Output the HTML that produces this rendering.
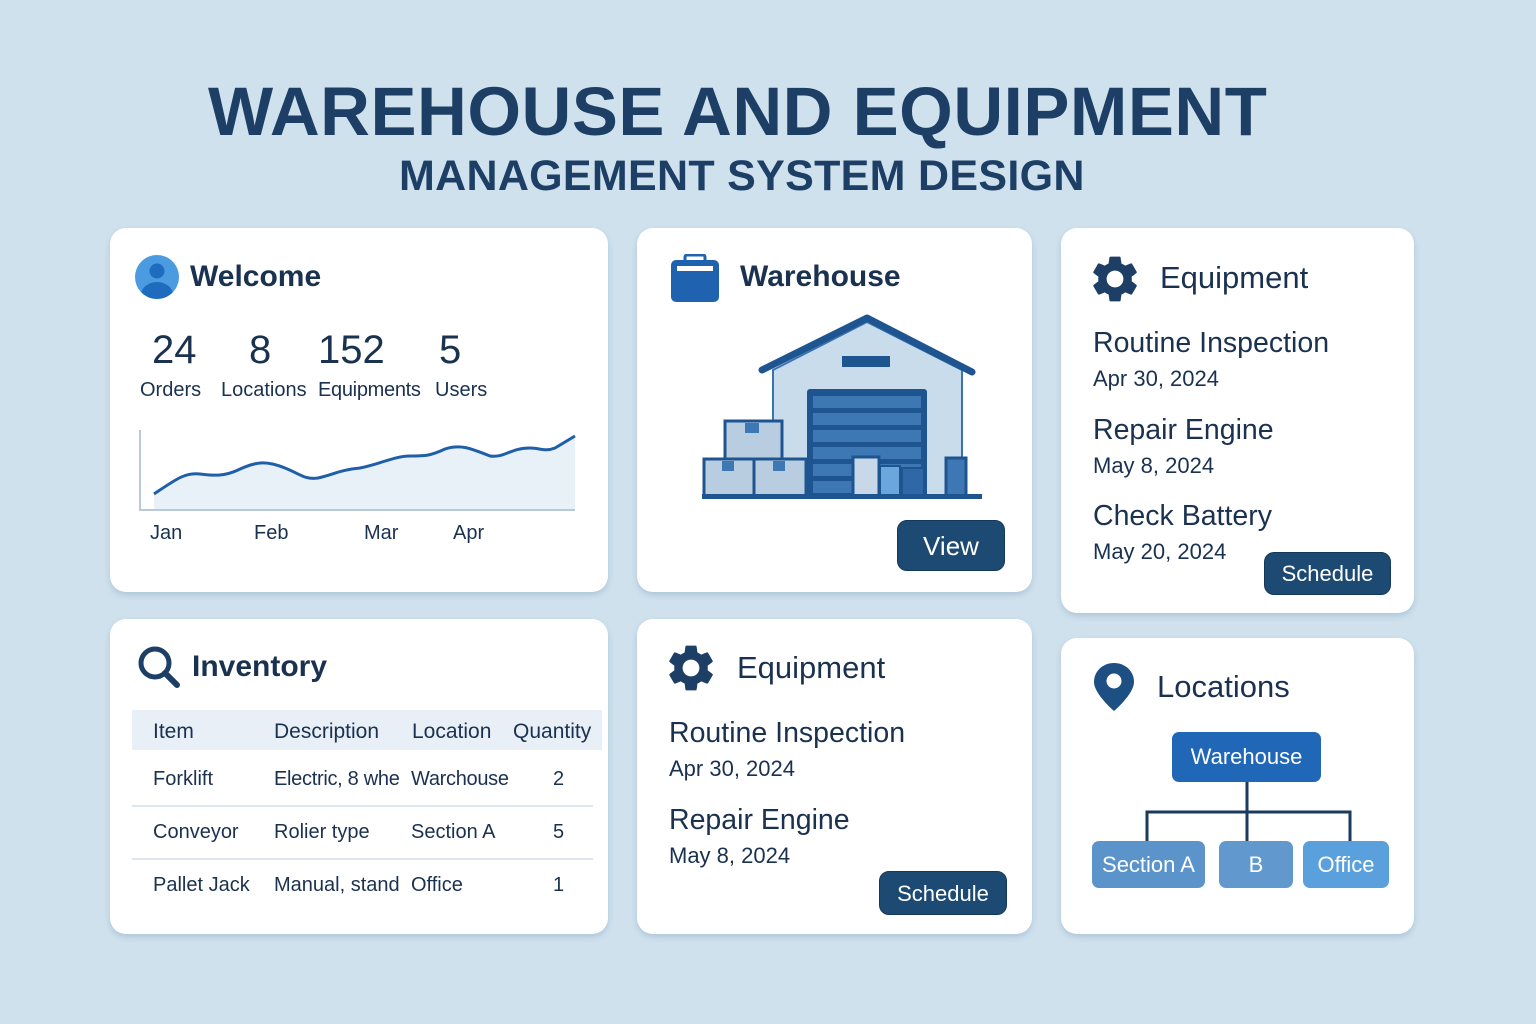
<!DOCTYPE html>
<html><head><meta charset="utf-8"><style>
*{margin:0;padding:0;box-sizing:border-box}
body{width:1536px;height:1024px;background:#cfe1ed;font-family:"Liberation Sans","DejaVu Sans",sans-serif;color:#1a3150;position:relative;overflow:hidden}
.a{position:absolute;white-space:nowrap}
.card{position:absolute;background:#fff;border-radius:16px;box-shadow:0 3px 6px rgba(80,120,160,.25)}
.h{font-size:30px;font-weight:bold;color:#1a3150}
.btn{position:absolute;background:#1d4a72;color:#fff;border-radius:10px;text-align:center;border:1px solid #15385a}
.t{font-size:20px;color:#1a3150}
.th{font-size:21px;color:#1a3150}
</style></head><body>
<div class="a" style="left:208px;top:72px;font-size:69px;font-weight:bold;color:#1d3f66;letter-spacing:0.5px">WAREHOUSE AND EQUIPMENT</div>
<div class="a" style="left:399px;top:152px;font-size:43px;font-weight:bold;color:#1d3f66;letter-spacing:0.3px">MANAGEMENT SYSTEM DESIGN</div>

<!-- Welcome -->
<div class="card" style="left:110px;top:228px;width:498px;height:364px"></div>
<svg class="a" style="left:135px;top:255px" width="44" height="44" viewBox="0 0 44 44"><defs><clipPath id="c"><circle cx="22" cy="22" r="22"/></clipPath></defs><circle cx="22" cy="22" r="22" fill="#4a9be0"/><g clip-path="url(#c)" fill="#1f6bbd"><circle cx="22" cy="16" r="7.5"/><ellipse cx="22" cy="40" rx="16" ry="13"/></g></svg>
<div class="a h" style="left:190px;top:260px">Welcome</div>
<div class="a" style="left:152px;top:328px;font-size:40px;color:#1a3150">24</div>
<div class="a" style="left:249px;top:328px;font-size:40px;color:#1a3150">8</div>
<div class="a" style="left:318px;top:328px;font-size:40px;color:#1a3150">152</div>
<div class="a" style="left:439px;top:328px;font-size:40px;color:#1a3150">5</div>
<div class="a t" style="left:140px;top:379px">Orders</div>
<div class="a t" style="left:221px;top:379px">Locations</div>
<div class="a t" style="left:318px;top:379px;letter-spacing:-0.3px">Equipments</div>
<div class="a t" style="left:435px;top:379px">Users</div>
<svg class="a" style="left:130px;top:420px" width="460" height="100" viewBox="130 420 460 100">
<path d="M154 494 C175 480 185 472 200 474 C215 476 225 476 238 470 C255 462 265 460 285 468 C300 474 305 480 318 478 C335 474 340 470 360 468 C380 464 395 456 410 456 C425 456 430 456 445 449 C460 444 470 448 490 456 C505 458 510 448 530 448 C540 448 545 452 555 448 L575 436 L575 510 L154 510Z" fill="#e9f1f8"/>
<path d="M154 494 C175 480 185 472 200 474 C215 476 225 476 238 470 C255 462 265 460 285 468 C300 474 305 480 318 478 C335 474 340 470 360 468 C380 464 395 456 410 456 C425 456 430 456 445 449 C460 444 470 448 490 456 C505 458 510 448 530 448 C540 448 545 452 555 448 L575 436" fill="none" stroke="#1f5faa" stroke-width="3"/>
<path d="M140 430 V510 H575" fill="none" stroke="#b9c9d8" stroke-width="2"/>
</svg>
<div class="a t" style="left:150px;top:522px">Jan</div>
<div class="a t" style="left:254px;top:522px">Feb</div>
<div class="a t" style="left:364px;top:522px">Mar</div>
<div class="a t" style="left:453px;top:522px">Apr</div>

<!-- Warehouse -->
<div class="card" style="left:637px;top:228px;width:395px;height:364px"></div>
<svg class="a" style="left:671px;top:254px" width="48" height="48" viewBox="0 0 48 48"><rect x="0" y="6" width="48" height="42" rx="5" fill="#1f63b0"/><rect x="14" y="1" width="20" height="10" rx="2" fill="none" stroke="#1f63b0" stroke-width="3"/><rect x="6" y="12" width="36" height="5" fill="#fff"/></svg>
<div class="a h" style="left:740px;top:260px">Warehouse</div>
<svg class="a" style="left:700px;top:314px" width="285" height="186" viewBox="700 314 285 186">
<path d="M773 370 L867 322 L962 370 V497 H773Z" fill="#c9dcec" stroke="#3a74b0" stroke-width="2"/>
<path d="M762 370 L867 318 L972 372" fill="none" stroke="#1e5591" stroke-width="7" stroke-linecap="round" stroke-linejoin="round"/>
<rect x="842" y="356" width="48" height="11" fill="#1e5591"/>
<rect x="807" y="389" width="120" height="108" rx="3" fill="#1e5591"/>
<g fill="#3d78b4"><rect x="813" y="396" width="108" height="12"/><rect x="813" y="413" width="108" height="12"/><rect x="813" y="430" width="108" height="12"/><rect x="813" y="447" width="108" height="12"/><rect x="813" y="464" width="108" height="12"/><rect x="813" y="481" width="108" height="12"/></g>
<rect x="853" y="457" width="26" height="40" fill="#c8d8e8" stroke="#1e5591" stroke-width="3"/>
<rect x="880" y="466" width="20" height="31" fill="#6ba6dc" stroke="#1e5591" stroke-width="2"/>
<rect x="902" y="468" width="22" height="29" fill="#2e68a6" stroke="#1e5591" stroke-width="2"/>
<rect x="946" y="458" width="20" height="39" fill="#3d78b4" stroke="#1e5591" stroke-width="3"/>
<rect x="725" y="421" width="57" height="38" fill="#b9cde0" stroke="#1e5591" stroke-width="3"/>
<rect x="745" y="423" width="14" height="10" fill="#3d78b4"/>
<rect x="704" y="459" width="50" height="38" fill="#b9cde0" stroke="#1e5591" stroke-width="3"/>
<rect x="754" y="459" width="52" height="38" fill="#b9cde0" stroke="#1e5591" stroke-width="3"/>
<rect x="722" y="461" width="12" height="10" fill="#3d78b4"/><rect x="773" y="461" width="12" height="10" fill="#3d78b4"/>
<rect x="702" y="494" width="280" height="5" fill="#1e5591"/>
</svg>
<div class="btn" style="left:897px;top:520px;width:108px;height:51px;font-size:26px;line-height:50px">View</div>

<!-- Equipment right -->
<div class="card" style="left:1061px;top:228px;width:353px;height:385px"></div>
<svg class="a" style="left:1087px;top:251px" width="56" height="56" viewBox="0 0 24 24"><path fill="#1d3f66" d="M19.14 12.94c.04-.3.06-.61.06-.94 0-.32-.02-.64-.07-.94l2.030-1.58a.49.49 0 0 0 .12-.61l-1.92-3.32a.49.49 0 0 0-.59-.22l-2.39.96c-.5-.38-1.03-.7-1.62-.94l-.36-2.54a.48.48 0 0 0-.48-.41h-3.84c-.24 0-.43.17-.47.41l-.36 2.54c-.59.24-1.13.57-1.62.94l-2.39-.96c-.22-.08-.47 0-.59.22L2.74 8.87c-.12.21-.08.47.12.61l2.03 1.58c-.05.3-.07.62-.07.94s.02.64.07.94l-2.03 1.58a.49.49 0 0 0-.12.61l1.92 3.32c.12.22.37.29.59.22l2.39-.96c.5.38 1.03.7 1.62.94l.36 2.54c.05.24.24.41.48.41h3.84c.24 0 .44-.17.47-.41l.36-2.54c.59-.24 1.13-.56 1.62-.94l2.39.96c.22.08.47 0 .59-.22l1.92-3.32c.12-.22.07-.47-.12-.61l-2.01-1.58zM12 15.6A3.6 3.6 0 1 1 12 8.4a3.6 3.6 0 0 1 0 7.2z"/></svg>
<div class="a h" style="left:1160px;top:260px;font-weight:normal;font-size:31px">Equipment</div>
<div class="a" style="left:1093px;top:327px;font-size:28.5px">Routine Inspection</div>
<div class="a" style="left:1093px;top:366px;font-size:22px">Apr 30, 2024</div>
<div class="a" style="left:1093px;top:414px;font-size:28.5px">Repair Engine</div>
<div class="a" style="left:1093px;top:453px;font-size:22px">May 8, 2024</div>
<div class="a" style="left:1093px;top:500px;font-size:28.5px">Check Battery</div>
<div class="a" style="left:1093px;top:539px;font-size:22px">May 20, 2024</div>
<div class="btn" style="left:1264px;top:552px;width:127px;height:43px;font-size:22px;line-height:42px">Schedule</div>

<!-- Inventory -->
<div class="card" style="left:110px;top:619px;width:498px;height:315px"></div>
<svg class="a" style="left:137px;top:645px" width="44" height="44" viewBox="0 0 44 44"><circle cx="18" cy="18" r="14" fill="none" stroke="#1d3f66" stroke-width="5"/><path d="M28 28 L40 40" stroke="#1d3f66" stroke-width="6" stroke-linecap="round"/></svg>
<div class="a h" style="left:192px;top:650px">Inventory</div>
<div class="a" style="left:132px;top:710px;width:470px;height:40px;background:#e8eff6"></div>
<div class="a th" style="left:153px;top:720px">Item</div>
<div class="a th" style="left:274px;top:720px">Description</div>
<div class="a th" style="left:412px;top:720px">Location</div>
<div class="a th" style="left:513px;top:720px">Quantity</div>
<div class="a t" style="left:153px;top:768px">Forklift</div><div class="a t" style="left:274px;top:768px;letter-spacing:-0.3px">Electric, 8 whe</div><div class="a t" style="left:411px;top:768px;letter-spacing:-0.3px">Warchouse</div><div class="a t" style="left:553px;top:768px">2</div>
<div class="a" style="left:132px;top:805px;width:461px;height:2px;background:#dde5ee"></div>
<div class="a t" style="left:153px;top:821px">Conveyor</div><div class="a t" style="left:274px;top:821px">Rolier type</div><div class="a t" style="left:411px;top:821px">Section A</div><div class="a t" style="left:553px;top:821px">5</div>
<div class="a" style="left:132px;top:858px;width:461px;height:2px;background:#dde5ee"></div>
<div class="a t" style="left:153px;top:874px">Pallet Jack</div><div class="a t" style="left:274px;top:874px">Manual, stand</div><div class="a t" style="left:411px;top:874px">Office</div><div class="a t" style="left:553px;top:874px">1</div>

<!-- Equipment middle -->
<div class="card" style="left:637px;top:619px;width:395px;height:315px"></div>
<svg class="a" style="left:663px;top:640px" width="56" height="56" viewBox="0 0 24 24"><path fill="#1d3f66" d="M19.14 12.94c.04-.3.06-.61.06-.94 0-.32-.02-.64-.07-.94l2.03-1.58a.49.49 0 0 0 .12-.61l-1.92-3.32a.49.49 0 0 0-.59-.22l-2.39.96c-.5-.38-1.03-.7-1.62-.94l-.36-2.54a.48.48 0 0 0-.48-.41h-3.84c-.24 0-.43.17-.47.41l-.36 2.54c-.59.24-1.13.57-1.62.94l-2.39-.96c-.22-.08-.47 0-.59.22L2.74 8.87c-.12.21-.08.47.12.61l2.03 1.58c-.05.3-.07.62-.07.94s.02.64.07.94l-2.03 1.58a.49.49 0 0 0-.12.61l1.92 3.32c.12.22.37.29.59.22l2.39-.96c.5.38 1.03.7 1.62.94l.36 2.54c.05.24.24.41.48.41h3.84c.24 0 .44-.17.47-.41l.36-2.54c.59-.24 1.13-.56 1.62-.94l2.39.96c.22.08.47 0 .59-.22l1.92-3.32c.12-.22.07-.47-.12-.61l-2.01-1.58zM12 15.6A3.6 3.6 0 1 1 12 8.4a3.6 3.6 0 0 1 0 7.2z"/></svg>
<div class="a h" style="left:737px;top:650px;font-weight:normal;font-size:31px">Equipment</div>
<div class="a" style="left:669px;top:717px;font-size:28.5px">Routine Inspection</div>
<div class="a" style="left:669px;top:756px;font-size:22px">Apr 30, 2024</div>
<div class="a" style="left:669px;top:804px;font-size:28.5px">Repair Engine</div>
<div class="a" style="left:669px;top:843px;font-size:22px">May 8, 2024</div>
<div class="btn" style="left:879px;top:871px;width:128px;height:44px;font-size:22px;line-height:43px">Schedule</div>

<!-- Locations -->
<div class="card" style="left:1061px;top:638px;width:353px;height:296px"></div>
<svg class="a" style="left:1094px;top:663px" width="40" height="48" viewBox="0 0 40 48"><path d="M20 0C9 0 0 8 0 19c0 12 20 29 20 29s20-17 20-29C40 8 31 0 20 0z" fill="#1d4f82"/><circle cx="20" cy="18" r="7.5" fill="#fff"/></svg>
<div class="a h" style="left:1157px;top:669px;font-weight:normal;font-size:31px">Locations</div>
<svg class="a" style="left:1140px;top:780px" width="220" height="65"><path d="M107 0 V30 M7 62 V32 H210 V62 M107 30 V62" fill="none" stroke="#1a3a5e" stroke-width="3"/></svg>
<div class="a" style="left:1172px;top:732px;width:149px;height:50px;background:#2067b8;border-radius:7px;color:#fff;font-size:22px;line-height:50px;text-align:center">Warehouse</div>
<div class="a" style="left:1092px;top:841px;width:113px;height:47px;background:#5a94cb;border-radius:7px;color:#fff;font-size:22px;line-height:47px;text-align:center">Section A</div>
<div class="a" style="left:1219px;top:841px;width:74px;height:47px;background:#6199ce;border-radius:7px;color:#fff;font-size:22px;line-height:47px;text-align:center">B</div>
<div class="a" style="left:1303px;top:841px;width:86px;height:47px;background:#59a0dc;border-radius:7px;color:#fff;font-size:22px;line-height:47px;text-align:center">Office</div>
</body></html>
